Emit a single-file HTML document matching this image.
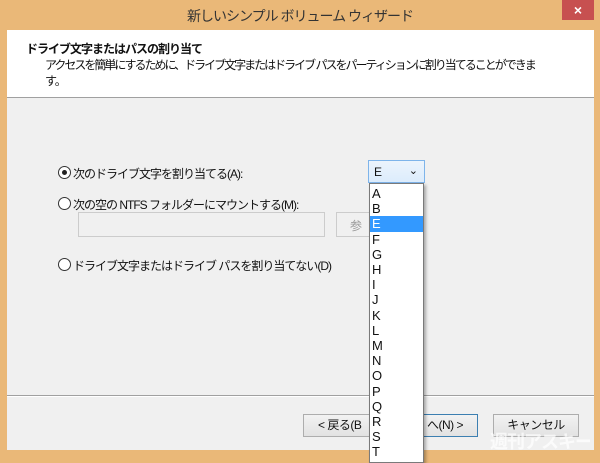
<!DOCTYPE html>
<html><head><meta charset="utf-8"><style>
*{margin:0;padding:0;box-sizing:border-box}
body{width:600px;height:458px;overflow:hidden;background:#eab878;font-family:"Liberation Sans","Noto Sans CJK JP",sans-serif;position:relative;color:#111}
.a{position:absolute}
.t{font-size:12px;white-space:nowrap;letter-spacing:-1px}
.rad{position:absolute;width:13px;height:13px;border:1px solid #333;border-radius:50%;background:#fff}
.btn{position:absolute;height:23px;border:1px solid #adadad;background:linear-gradient(#f2f2f2,#e2e2e2);font-size:12px;text-align:center;line-height:21px;letter-spacing:-0.5px}
</style></head><body>
<div class="a" style="left:562px;top:0;width:32px;height:20px;background:#c75050;color:#fff;text-align:center;font-size:14px;line-height:20px;font-weight:bold">×</div>
<div class="a t" style="left:0;width:600px;top:6px;text-align:center;font-size:14px;color:#333;letter-spacing:-1px">新しいシンプル ボリューム ウィザード</div>
<div class="a" style="left:7px;top:30px;width:587px;height:420px;background:#f0f0f0"></div>
<div class="a" style="left:7px;top:30px;width:587px;height:68px;background:#fff;border-bottom:1px solid #a0a0a0"></div>
<div class="a t" style="left:26px;top:40px;font-weight:bold">ドライブ文字またはパスの割り当て</div>
<div class="a t" style="left:45px;top:56px;letter-spacing:-2px">アクセスを簡単にするために、ドライブ文字またはドライブ パスをパーティションに割り当てることができま</div>
<div class="a t" style="left:45px;top:72px">す。</div>
<div class="rad" style="left:58px;top:166px"><div class="a" style="left:3px;top:3px;width:5px;height:5px;border-radius:50%;background:#222"></div></div>
<div class="a t" style="left:73px;top:165px">次のドライブ文字を割り当てる(A):</div>
<div class="rad" style="left:58px;top:197px"></div>
<div class="a t" style="left:73px;top:196px">次の空の NTFS フォルダーにマウントする(M):</div>
<div class="a" style="left:78px;top:212px;width:247px;height:25px;border:1px solid #ccc;background:#f0f0f0"></div>
<div class="a" style="left:336px;top:212px;width:40px;height:25px;border:1px solid #ccc;background:#f0f0f0;font-size:12px;color:#999;padding:4px 0 0 13px">参</div>
<div class="rad" style="left:58px;top:258px"></div>
<div class="a t" style="left:73px;top:257px">ドライブ文字またはドライブ パスを割り当てない(D)</div>
<div class="a" style="left:7px;top:395px;width:587px;border-top:1px solid #a0a0a0;border-bottom:1px solid #fff"></div>
<div class="btn" style="left:303px;top:414px;width:80px;text-align:left;padding-left:14px">&lt; 戻る(B</div>
<div class="btn" style="left:380px;top:414px;width:98px;border-color:#3c7fb1;text-align:right;padding-right:14px">へ(N) &gt;</div>
<div class="btn" style="left:493px;top:414px;width:86px">キャンセル</div>
<div class="a" style="left:490px;top:428px;width:100px;height:26px;overflow:hidden;font-size:18px;color:rgba(255,255,255,.7);font-weight:bold;white-space:nowrap;letter-spacing:-1px">週刊アスキー</div>
<div class="a" style="left:368px;top:160px;width:57px;height:23px;border:1px solid #7eb4ea;background:linear-gradient(#ecf4fc,#dcecfc);font-size:12px;padding:4px 0 0 5px">E<span style="position:absolute;right:6px;top:3px;font-size:11px">⌄</span></div>
<div class="a" style="left:369px;top:183px;width:55px;height:280px;background:#fff;border:1px solid #7a7a7a;box-shadow:2px 2px 3px rgba(0,0,0,.3);font-size:13px;line-height:15.2px;padding-top:2px">
<div style="padding-left:2px">A</div><div style="padding-left:2px">B</div><div style="padding-left:2px;background:#3399ff;color:#fff">E</div>
<div style="padding-left:2px">F</div><div style="padding-left:2px">G</div><div style="padding-left:2px">H</div><div style="padding-left:2px">I</div><div style="padding-left:2px">J</div><div style="padding-left:2px">K</div><div style="padding-left:2px">L</div><div style="padding-left:2px">M</div><div style="padding-left:2px">N</div><div style="padding-left:2px">O</div><div style="padding-left:2px">P</div><div style="padding-left:2px">Q</div><div style="padding-left:2px">R</div><div style="padding-left:2px">S</div><div style="padding-left:2px">T</div>
</div>
</body></html>
